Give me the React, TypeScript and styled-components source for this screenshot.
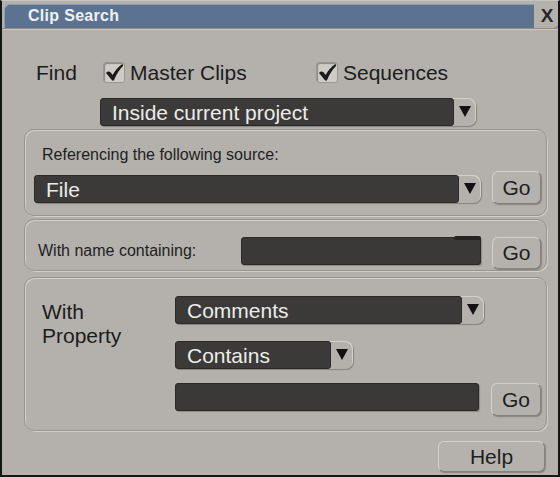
import React from 'react';
import styled, { createGlobalStyle } from 'styled-components';

const GlobalStyle = createGlobalStyle`
  html, body {
    margin: 0;
    padding: 0;
    background: #b4b1ad;
  }
  body {
    font-family: "Liberation Sans", Arial, sans-serif;
  }
  * {
    box-sizing: border-box;
  }
`;

const Window = styled.div`
  width: 560px;
  height: 477px;
  background: #b4b1ad;
  border: 2px solid #151515;
  border-top: 1px solid #c6c4c1;
  display: flex;
  flex-direction: column;
  overflow: hidden;
`;

const TitleRow = styled.div`
  display: flex;
  height: 24px;
  margin: 3px 0 0 2px;
`;

const TitleBar = styled.div`
  flex: 1;
  background: #5b7391;
  border-top: 1px solid #8c9cb2;
  border-left: 1px solid #8c9cb2;
  border-radius: 6px 0 0 0;
  padding-left: 23px;
  color: #eef0f4;
  font-weight: 700;
  font-size: 16px;
  line-height: 22px;
  letter-spacing: 0.3px;
`;

const CloseBox = styled.div`
  width: 22px;
  margin-left: 2px;
  display: flex;
  align-items: center;
  justify-content: center;
  font-weight: 700;
  font-size: 19px;
  color: #262626;
  border-bottom-right-radius: 5px;
  box-shadow: 1px 1px 0 #8f8c88;
`;

const Body = styled.div`
  flex: 1;
  display: flex;
  flex-direction: column;
  padding: 0 11px 0 22px;
  border-top: 1px solid #8e8b87;
  box-shadow: inset 0 1px 0 #cdcac6;
  color: #1c1c1c;
`;

const FindRow = styled.div`
  display: flex;
  align-items: center;
  height: 21px;
  margin-top: 33px;
  padding-left: 12px;
  font-size: 21px;
  line-height: 21px;
`;

const FindLabel = styled.span`
  width: 67px;
`;

const CheckItem = styled.label<{ $width?: number }>`
  display: flex;
  align-items: center;
  gap: 5px;
  width: ${p => (p.$width ? `${p.$width}px` : 'auto')};
`;

const CheckBox = styled.span`
  width: 22px;
  height: 21px;
  border-radius: 3px;
  background: #cfccc8;
  border: 1px solid #9a9793;
  box-shadow: inset 1px 1px 1px #8a8783;
  display: flex;
  align-items: center;
  justify-content: center;
`;

const DropFrame = styled.div<{ $width: number }>`
  display: flex;
  width: ${p => p.$width}px;
  height: 28px;
  border-radius: 4px 8px 8px 4px;
  box-shadow: inset -1px 1px 0 #d3d0cc, 1px 1px 1px #86837f;
  flex-shrink: 0;
`;

const DarkField = styled.div`
  position: relative;
  flex: 1;
  height: 100%;
  background: #3b3a38;
  border: 1px solid #2a2928;
  border-radius: 3px;
  color: #ececea;
  font-size: 21px;
  line-height: 26px;
  padding: 1px 0 0 11px;
  white-space: nowrap;
  overflow: hidden;
`;

const ArrowBox = styled.div`
  width: 22px;
  display: flex;
  align-items: center;
  justify-content: center;
  &::before {
    content: '';
    display: block;
    margin-top: -2px;
    border-left: 6px solid transparent;
    border-right: 6px solid transparent;
    border-top: 11px solid #121212;
  }
`;

const FindDrop = styled.div`
  margin: 15px 0 0 76px;
`;

const Panel = styled.section`
  border: 1px solid #969390;
  border-radius: 10px;
  box-shadow: inset 1px 1px 0 #d2cfcb, 1px 1px 0 #d2cfcb;
`;

const SourcePanel = styled(Panel)`
  margin-top: 3px;
  height: 87px;
  padding: 15px 5px 0 9px;
`;

const SmallLabel = styled.div`
  font-size: 16px;
  line-height: 20px;
  color: #1e1e1e;
`;

const SourceLabel = styled(SmallLabel)`
  margin-left: 8px;
`;

const SourceRow = styled.div`
  display: flex;
  align-items: flex-start;
  gap: 11px;
  margin-top: 6px;
  & > ${DropFrame} {
    margin-top: 4px;
  }
`;

const NamePanel = styled(Panel)`
  margin-top: 3px;
  height: 52px;
  padding: 17px 5px 0 13px;
  display: flex;
  align-items: flex-start;
  gap: 0;
`;

const NameLabel = styled(SmallLabel)`
  width: 203px;
  line-height: 27px;
`;

const TextInput = styled.div<{ $width: number; $notch?: boolean }>`
  position: relative;
  width: ${p => p.$width}px;
  height: 28px;
  background: #3a3937;
  border: 1px solid #2a2928;
  border-radius: 3px;
  box-shadow: 1px 1px 1px #8d8a86;
  flex-shrink: 0;
  &::after {
    content: '';
    display: ${p => (p.$notch ? 'block' : 'none')};
    position: absolute;
    right: -1px;
    top: -2px;
    width: 27px;
    height: 4px;
    background: #252423;
    border-radius: 2px 2px 0 0;
  }
`;

const Button = styled.button<{ $width: number; $height: number }>`
  width: ${p => p.$width}px;
  height: ${p => p.$height}px;
  flex-shrink: 0;
  padding: 0;
  background: #b5b2ae;
  border: 1px solid;
  border-color: #d5d2ce #85827e #85827e #d5d2ce;
  border-radius: 6px;
  box-shadow: 1px 1px 1px rgba(0, 0, 0, 0.25);
  font-family: "Liberation Sans", Arial, sans-serif;
  font-size: 21px;
  color: #1e1e1e;
`;

const NameGo = styled(Button)`
  margin-left: 11px;
`;

const PropertyPanel = styled(Panel)`
  margin-top: 6px;
  height: 154px;
  padding: 18px 5px 0 17px;
  display: grid;
  grid-template-columns: 133px 1fr;
  align-items: start;
`;

const PropertyLabel = styled.div`
  margin-top: 4px;
  font-size: 21px;
  line-height: 24px;
`;

const Controls = styled.div`
  display: flex;
  flex-direction: column;
  align-items: flex-start;
`;

const ContainsDrop = styled.div`
  margin-top: 17px;
`;

const ValueRow = styled.div`
  display: flex;
  align-items: flex-start;
  gap: 12px;
  margin-top: 14px;
`;

const HelpButton = styled(Button)`
  align-self: flex-end;
  margin: 10px 2px 0 0;
`;

const Check = () => (
  <svg width="20" height="19" viewBox="0 0 20 19">
    <path
      d="M2 10 Q4 7.5 6.5 9.2 L8.6 12 Q12.5 5 18 1.2 Q19.8 1 19 3 Q13.5 8.5 10.2 16.8 Q9 18.6 7.6 16.8 Z"
      fill="#1a1a1a"
    />
  </svg>
);

const Dropdown = ({ width, value }: { width: number; value: string }) => (
  <DropFrame $width={width}>
    <DarkField>{value}</DarkField>
    <ArrowBox />
  </DropFrame>
);

export default function App() {
  return (
    <>
      <GlobalStyle />
      <Window>
        <TitleRow>
          <TitleBar>Clip Search</TitleBar>
          <CloseBox>X</CloseBox>
        </TitleRow>
        <Body>
          <FindRow>
            <FindLabel>Find</FindLabel>
            <CheckItem $width={213}>
              <CheckBox><Check /></CheckBox>
              Master Clips
            </CheckItem>
            <CheckItem>
              <CheckBox><Check /></CheckBox>
              Sequences
            </CheckItem>
          </FindRow>
          <FindDrop>
            <Dropdown width={376} value="Inside current project" />
          </FindDrop>

          <SourcePanel>
            <SourceLabel>Referencing the following source:</SourceLabel>
            <SourceRow>
              <Dropdown width={447} value="File" />
              <Button $width={49} $height={33}>Go</Button>
            </SourceRow>
          </SourcePanel>

          <NamePanel>
            <NameLabel>With name containing:</NameLabel>
            <TextInput $width={240} $notch />
            <NameGo $width={49} $height={32}>Go</NameGo>
          </NamePanel>

          <PropertyPanel>
            <PropertyLabel>With<br />Property</PropertyLabel>
            <Controls>
              <Dropdown width={309} value="Comments" />
              <ContainsDrop>
                <Dropdown width={178} value="Contains" />
              </ContainsDrop>
              <ValueRow>
                <TextInput $width={304} />
                <Button $width={50} $height={33}>Go</Button>
              </ValueRow>
            </Controls>
          </PropertyPanel>

          <HelpButton $width={107} $height={31}>Help</HelpButton>
        </Body>
      </Window>
    </>
  );
}
